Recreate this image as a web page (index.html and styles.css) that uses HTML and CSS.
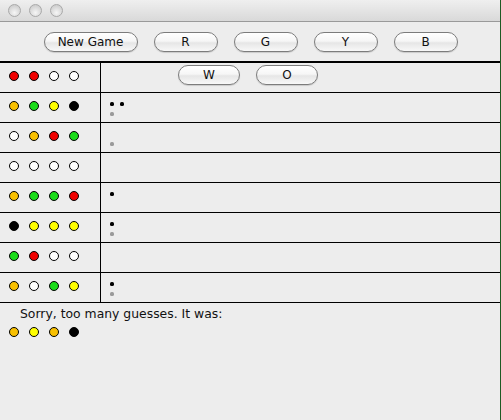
FILE: index.html
```html
<!DOCTYPE html>
<html>
<head>
<meta charset="utf-8">
<link rel="stylesheet" href="styles.css">
</head>
<body>
<div class="window">
  <div class="titlebar">
    <span class="light"></span><span class="light"></span><span class="light"></span>
  </div>
  <div class="toolbar">
    <button class="btn wide">New Game</button>
    <button class="btn">R</button>
    <button class="btn">G</button>
    <button class="btn">Y</button>
    <button class="btn">B</button>
  </div>
  <div class="board">
    <div class="row">
      <div class="guess"><i class="peg red"></i><i class="peg red"></i><i class="peg white"></i><i class="peg white"></i></div>
      <div class="fb extra"><button class="btn">W</button><button class="btn">O</button></div>
    </div>
    <div class="row">
      <div class="guess"><i class="peg orange"></i><i class="peg green"></i><i class="peg yellow"></i><i class="peg black"></i></div>
      <div class="fb"><div class="line"><i class="dot k"></i><i class="dot k"></i></div><div class="line"><i class="dot g"></i></div></div>
    </div>
    <div class="row">
      <div class="guess"><i class="peg white"></i><i class="peg orange"></i><i class="peg red"></i><i class="peg green"></i></div>
      <div class="fb"><div class="line"></div><div class="line"><i class="dot g"></i></div></div>
    </div>
    <div class="row">
      <div class="guess"><i class="peg white"></i><i class="peg white"></i><i class="peg white"></i><i class="peg white"></i></div>
      <div class="fb"></div>
    </div>
    <div class="row">
      <div class="guess"><i class="peg orange"></i><i class="peg green"></i><i class="peg green"></i><i class="peg red"></i></div>
      <div class="fb"><div class="line"><i class="dot k"></i></div><div class="line"></div></div>
    </div>
    <div class="row">
      <div class="guess"><i class="peg black"></i><i class="peg yellow"></i><i class="peg yellow"></i><i class="peg yellow"></i></div>
      <div class="fb"><div class="line"><i class="dot k"></i></div><div class="line"><i class="dot g"></i></div></div>
    </div>
    <div class="row">
      <div class="guess"><i class="peg green"></i><i class="peg red"></i><i class="peg white"></i><i class="peg white"></i></div>
      <div class="fb"></div>
    </div>
    <div class="row">
      <div class="guess"><i class="peg orange"></i><i class="peg white"></i><i class="peg green"></i><i class="peg yellow"></i></div>
      <div class="fb"><div class="line"><i class="dot k"></i></div><div class="line"><i class="dot g"></i></div></div>
    </div>
  </div>
  <div class="result">
    <p class="msg">Sorry, too many guesses. It was:</p>
    <div class="answer"><i class="peg orange"></i><i class="peg yellow"></i><i class="peg orange"></i><i class="peg black"></i></div>
  </div>
</div>
</body>
</html>
```
FILE: styles.css
```css
html, body {
  margin: 0;
  padding: 0;
  background: #ededed;
}
body {
  font-family: "DejaVu Sans", "Liberation Sans", sans-serif;
}
.window {
  width: 500px;
  height: 420px;
  border-right: 1px solid #1f5a24;
  background: #ededed;
  display: flex;
  flex-direction: column;
}
.titlebar {
  height: 22px;
  border-bottom: 1px solid #9a9a9a;
  background: linear-gradient(#efefef, #d9d9d9);
  display: flex;
  align-items: flex-start;
  gap: 8px;
  padding: 4px 0 0 8px;
  box-sizing: border-box;
}
.light {
  width: 13px;
  height: 13px;
  border-radius: 50%;
  box-sizing: border-box;
  border: 1px solid #a9a9a9;
  background: radial-gradient(circle at 50% 70%, #f6f6f6, #d2d2d2 70%, #c4c4c4);
}
.toolbar {
  height: 39px;
  box-sizing: border-box;
  padding-top: 10px;
  display: flex;
  justify-content: center;
  gap: 16px;
  padding-left: 1px;
}
.btn {
  width: 64px;
  height: 20px;
  margin: 0;
  padding: 0;
  border: 1px solid #7c7c7c;
  border-radius: 10px;
  background: linear-gradient(#ffffff, #f6f6f6 45%, #e6e6e6 55%, #f8f8f8);
  box-shadow: 0 1px 1px rgba(0,0,0,0.15);
  font-family: "DejaVu Sans", "Liberation Sans", sans-serif;
  font-size: 12px;
  color: #111;
  line-height: 18px;
}
.btn.wide {
  width: 94px;
}
.board {
  border-top: 2px solid #000;
}
.row {
  display: flex;
  height: 30px;
  box-sizing: border-box;
  border-bottom: 1px solid #000;
}
.guess {
  width: 101px;
  border-right: 1px solid #000;
  display: flex;
  gap: 10px;
  padding: 8px 0 0 9px;
  box-sizing: border-box;
}
.peg {
  display: block;
  width: 10px;
  height: 10px;
  border-radius: 50%;
  border: 1px solid #000;
  box-sizing: border-box;
}
.red { background: #f00000; }
.white { background: #ffffff; }
.orange { background: #f8c000; }
.green { background: #18dc18; }
.yellow { background: #ffff00; }
.black { background: #000; }
.fb {
  flex: 1;
  padding: 9px 0 0 9px;
  display: flex;
  flex-direction: column;
  gap: 6px;
}
.fb.extra {
  flex-direction: row;
  padding: 2px 0 0 77px;
  gap: 16px;
}
.fb.extra .btn {
  width: 62px;
}
.line {
  display: flex;
  gap: 6px;
  height: 4px;
}
.dot {
  display: block;
  width: 4px;
  height: 4px;
  border-radius: 40%;
}
.dot.k { background: #000; }
.dot.g { background: #9a9a9a; }
.result {
  padding: 3px 0 0 9px;
}
.msg {
  margin: 0 0 6px 11px;
  font-size: 12.4px;
  line-height: 15px;
  color: #111;
}
.answer {
  display: flex;
  gap: 10px;
}
```
